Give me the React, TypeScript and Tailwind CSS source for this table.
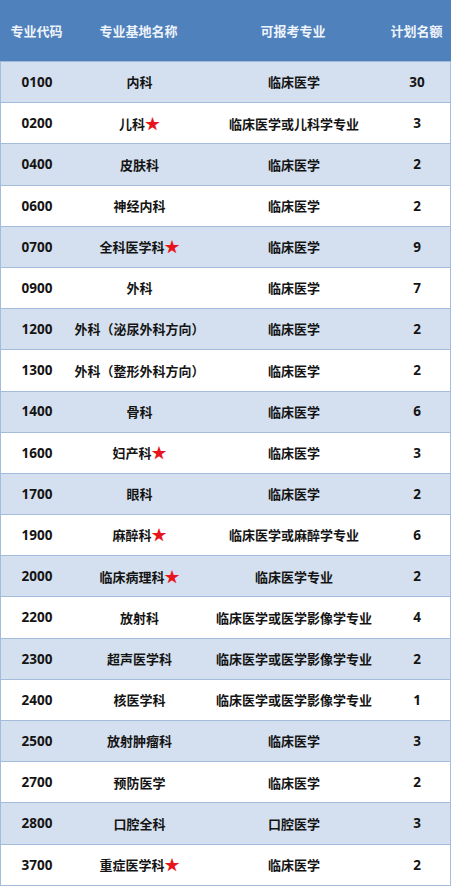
import React from "react";

type Row = { code: string; name: string; star?: boolean; major: string; count: string };

const rows: Row[] = [
  { code: "0100", name: "内科", major: "临床医学", count: "30" },
  { code: "0200", name: "儿科", star: true, major: "临床医学或儿科学专业", count: "3" },
  { code: "0400", name: "皮肤科", major: "临床医学", count: "2" },
  { code: "0600", name: "神经内科", major: "临床医学", count: "2" },
  { code: "0700", name: "全科医学科", star: true, major: "临床医学", count: "9" },
  { code: "0900", name: "外科", major: "临床医学", count: "7" },
  { code: "1200", name: "外科（泌尿外科方向）", major: "临床医学", count: "2" },
  { code: "1300", name: "外科（整形外科方向）", major: "临床医学", count: "2" },
  { code: "1400", name: "骨科", major: "临床医学", count: "6" },
  { code: "1600", name: "妇产科", star: true, major: "临床医学", count: "3" },
  { code: "1700", name: "眼科", major: "临床医学", count: "2" },
  { code: "1900", name: "麻醉科", star: true, major: "临床医学或麻醉学专业", count: "6" },
  { code: "2000", name: "临床病理科", star: true, major: "临床医学专业", count: "2" },
  { code: "2200", name: "放射科", major: "临床医学或医学影像学专业", count: "4" },
  { code: "2300", name: "超声医学科", major: "临床医学或医学影像学专业", count: "2" },
  { code: "2400", name: "核医学科", major: "临床医学或医学影像学专业", count: "1" },
  { code: "2500", name: "放射肿瘤科", major: "临床医学", count: "3" },
  { code: "2700", name: "预防医学", major: "临床医学", count: "2" },
  { code: "2800", name: "口腔全科", major: "口腔医学", count: "3" },
  { code: "3700", name: "重症医学科", star: true, major: "临床医学", count: "2" },
];

const cjk = { fontFamily: '"Noto Sans CJK SC", "Noto Sans", sans-serif' };
const num = { fontFamily: '"Open Sans", "Noto Sans CJK SC", sans-serif' };

export default function App() {
  return (
    <div className="w-[451px] h-[886px] bg-white overflow-hidden" style={cjk}>
      <div className="grid grid-cols-[72px_134px_174px_71px] h-[62px] bg-[#4f81bd] text-[#eef3fa] text-[13px] font-bold items-center text-center border-b border-[#9fb9dc]">
        <div className="pl-[1px]">专业代码</div>
        <div className="-ml-[1px]">专业基地名称</div>
        <div>可报考专业</div>
        <div className="pl-[2px]">计划名额</div>
      </div>
      {rows.map((r, i) => (
        <div
          key={r.code}
          className={
            "grid grid-cols-[72px_134px_174px_71px] h-[41.2px] items-center text-center text-[13px] font-bold text-[#141414] border-b border-l border-r border-[#a3bcdc] " +
            (i % 2 === 0 ? "bg-[#d4e0ef]" : "bg-white")
          }
        >
          <div className="text-[13.5px]" style={num}>{r.code}</div>
          <div className="whitespace-nowrap -ml-[1px]">
            {r.name}
            {r.star && <span className="text-[#e8141c] text-[15px] leading-none">★</span>}
          </div>
          <div className="whitespace-nowrap">{r.major}</div>
          <div className="text-[13.5px] pl-[1px]" style={num}>{r.count}</div>
        </div>
      ))}
    </div>
  );
}
